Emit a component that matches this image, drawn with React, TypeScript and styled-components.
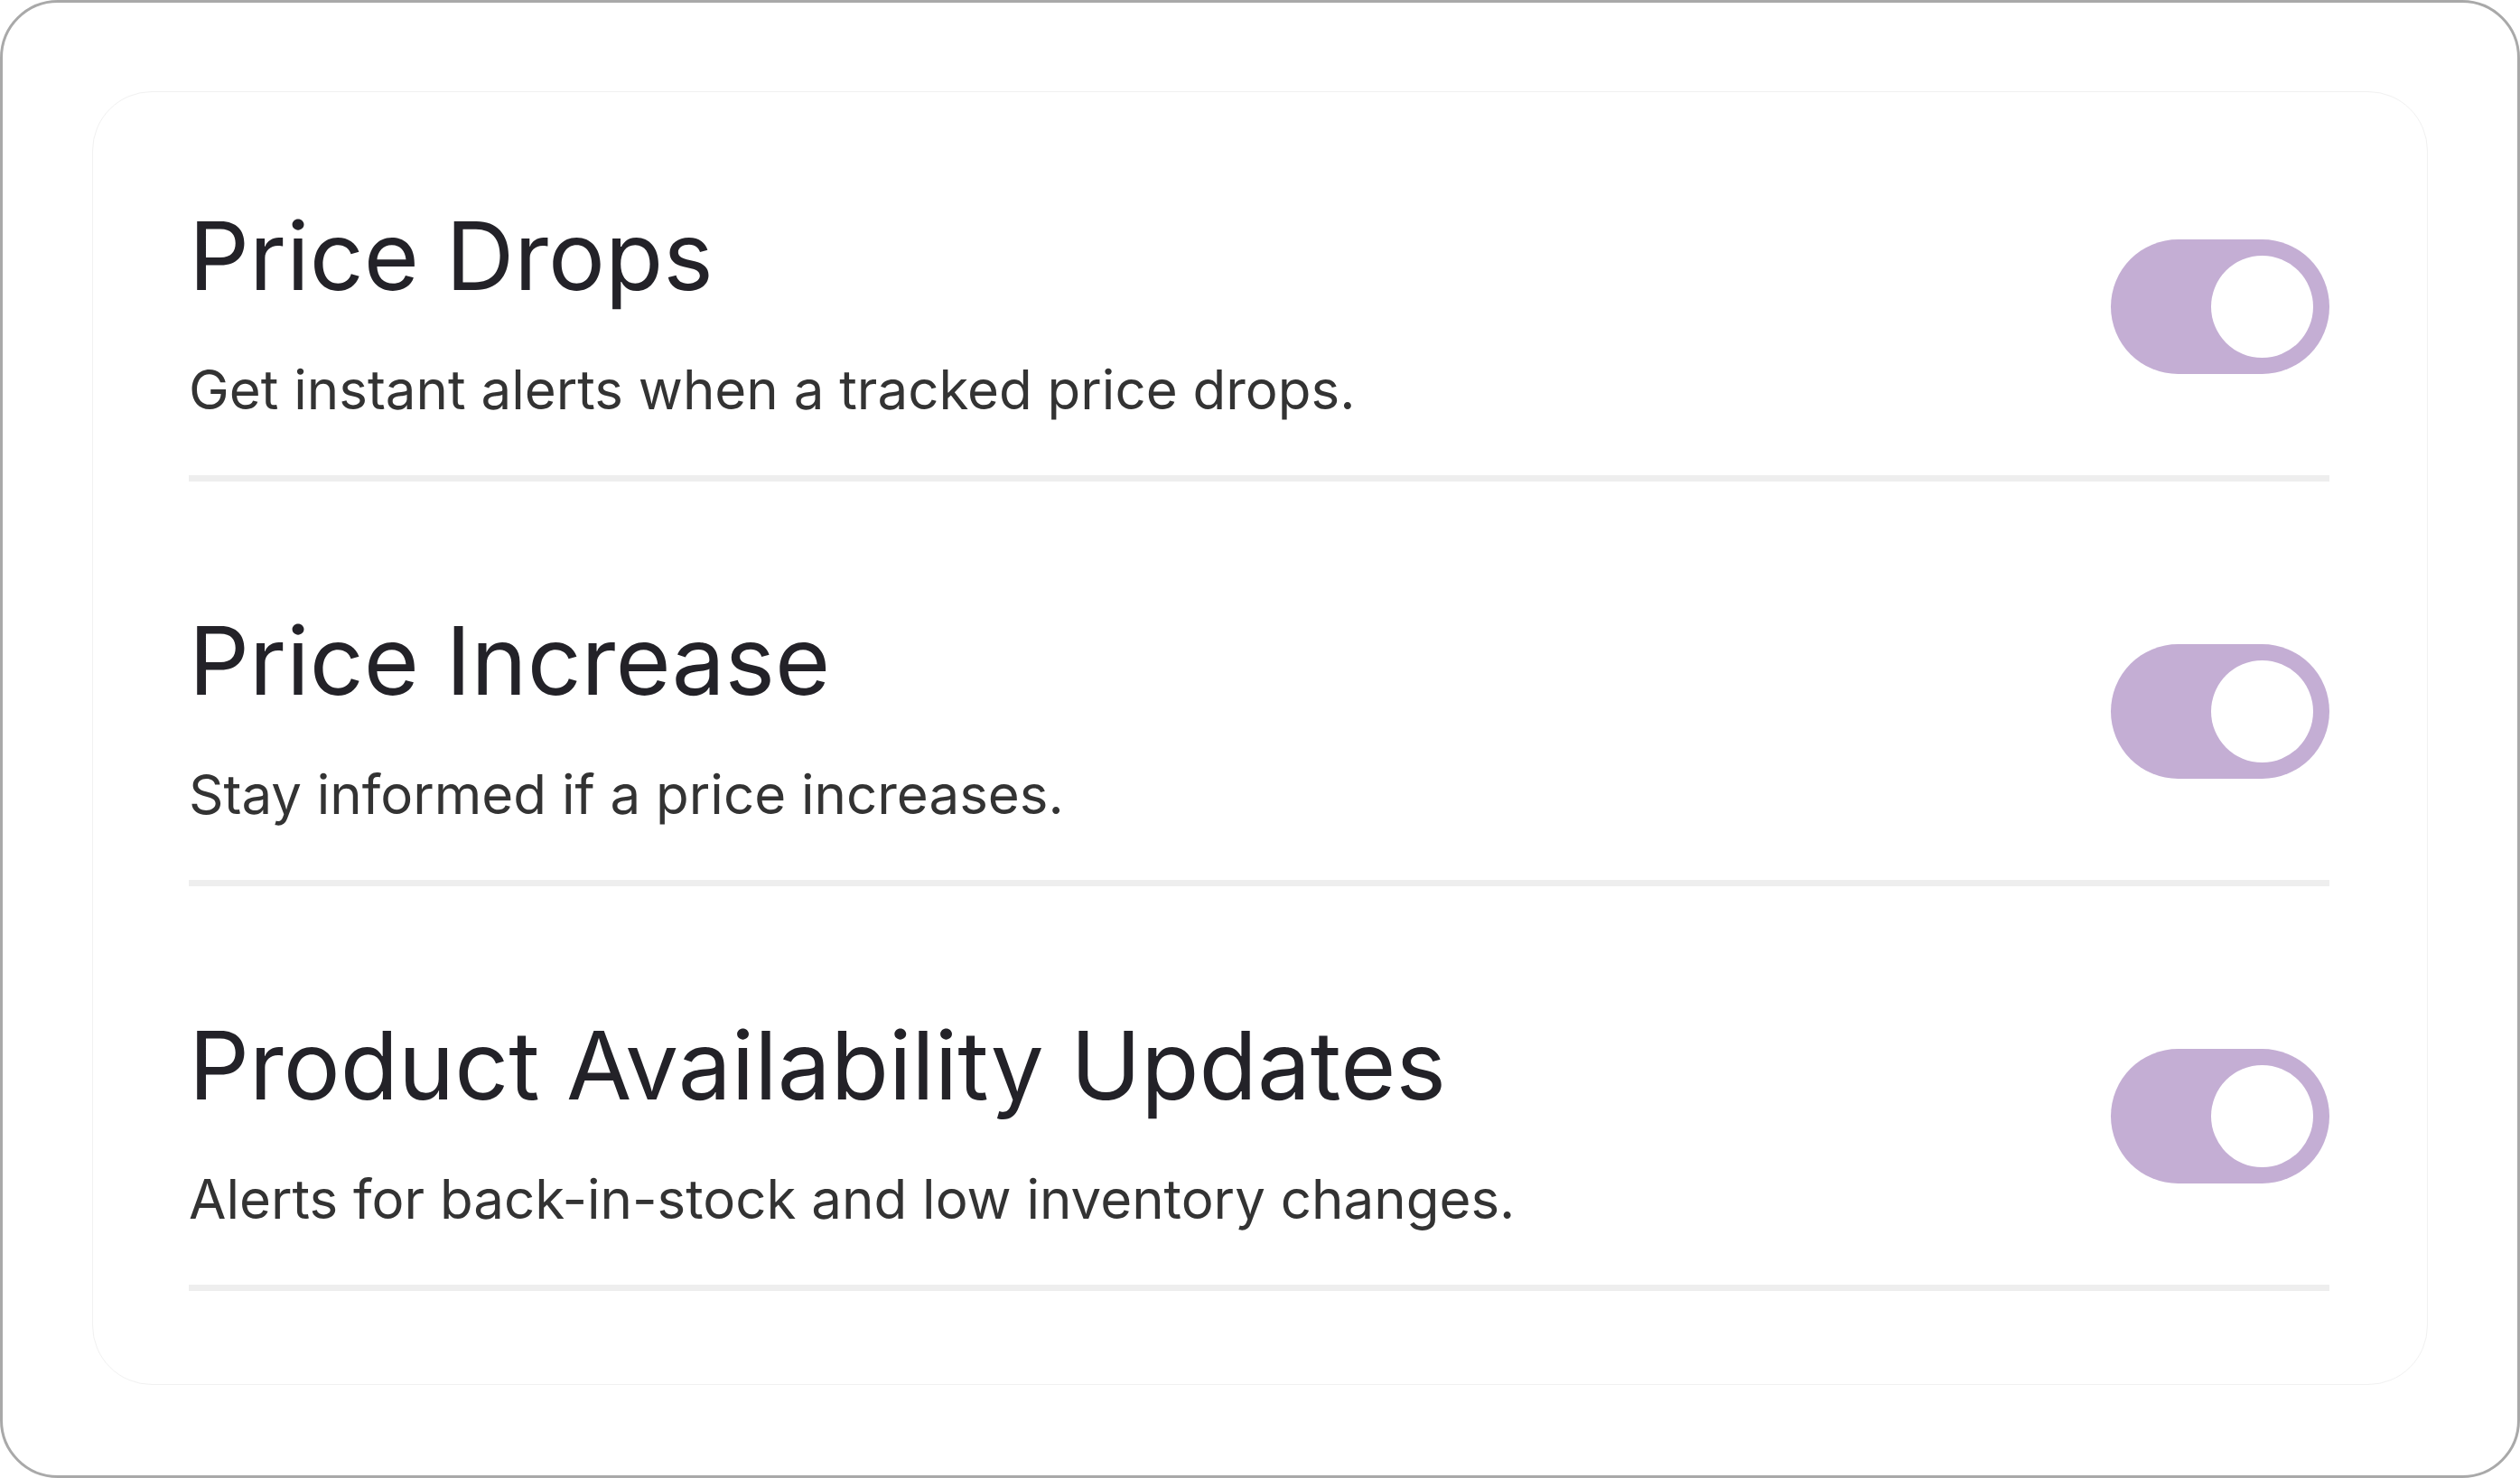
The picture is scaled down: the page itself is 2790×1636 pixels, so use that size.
import styled, { createGlobalStyle } from 'styled-components'

const GlobalStyle = createGlobalStyle`
  html, body {
    margin: 0;
    padding: 0;
    background: #ffffff;
  }
  body {
    font-family: Inter, 'Noto Sans', sans-serif;
  }
`

const alerts = [
  { title: 'Price Drops', text: 'Get instant alerts when a tracked price drops.' },
  { title: 'Price Increase', text: 'Stay informed if a price increases.' },
  { title: 'Product Availability Updates', text: 'Alerts for back-in-stock and low inventory changes.' },
]

export default function App() {
  return (
    <>
      <GlobalStyle />
      <Frame>
        <Card>
          {alerts.map((a) => (
            <Row key={a.title}>
              <Copy>
                <Title>{a.title}</Title>
                <Description>{a.text}</Description>
              </Copy>
              <Toggle role="switch" aria-checked $on>
                <Knob />
              </Toggle>
            </Row>
          ))}
        </Card>
      </Frame>
    </>
  )
}

const Frame = styled.div`
  box-sizing: border-box;
  width: 2790px;
  height: 1636px;
  border: 3px solid #a9a9a9;
  border-radius: 64px;
  padding: 98px 99px 100px 99px;
  display: flex;
`

const Card = styled.div`
  box-sizing: border-box;
  flex: 1;
  border: 1px solid #f1f1f1;
  border-radius: 66px;
  padding: 118px 108px 100px 106px;
  display: flex;
  flex-direction: column;
  gap: 135px;
`

const Row = styled.div`
  display: flex;
  align-items: center;
  justify-content: space-between;
  padding-bottom: 59px;
  border-bottom: 7px solid #eeeeee;
`

const Copy = styled.div`
  display: flex;
  flex-direction: column;
  gap: 49px;
`

const Title = styled.h2`
  margin: 0;
  font-family: Inter, 'Noto Sans', sans-serif;
  font-weight: 400;
  font-size: 105px;
  line-height: 126px;
  color: #232228;
`

const Description = styled.p`
  margin: 0;
  font-family: Inter, 'Noto Sans', sans-serif;
  font-weight: 400;
  font-size: 60px;
  line-height: 72px;
  color: #333333;
`

const Toggle = styled.div<{ $on?: boolean }>`
  box-sizing: border-box;
  width: 242px;
  height: 149px;
  border-radius: 75px;
  background: ${(p) => (p.$on ? '#c4aed4' : '#dddddd')};
  padding: 18px;
  display: flex;
  justify-content: ${(p) => (p.$on ? 'flex-end' : 'flex-start')};
  align-items: center;
  margin-top: -8px;
`

const Knob = styled.div`
  width: 113px;
  height: 113px;
  border-radius: 50%;
  background: #ffffff;
`
